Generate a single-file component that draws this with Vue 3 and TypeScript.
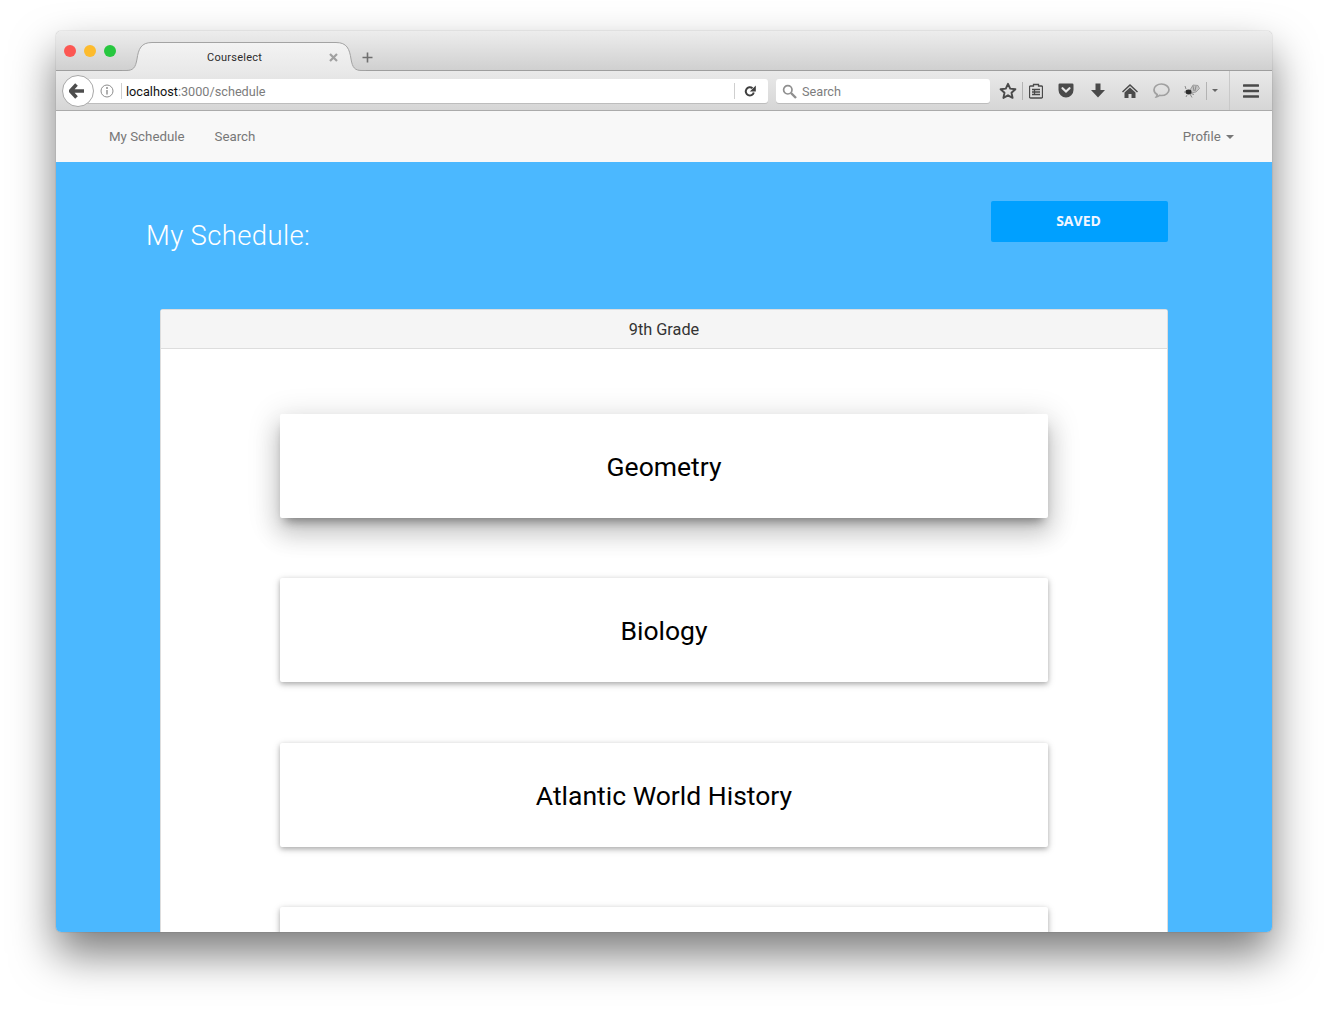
<script setup lang="ts">
const courses: string[] = ['Geometry', 'Biology', 'Atlantic World History', 'Algebra']
</script>

<template>
  <div class="stage">
    <div class="window">
      <div class="titlebar">
        <div class="lights">
          <span class="light red"></span>
          <span class="light yellow"></span>
          <span class="light green"></span>
        </div>
        <div class="tab">
          <svg class="tab-shape" width="244" height="29" viewBox="0 0 244 29">
            <defs>
              <linearGradient id="tabfill" x1="0" y1="0" x2="0" y2="1">
                <stop offset="0" stop-color="#f3f3f3" />
                <stop offset="1" stop-color="#e9e9e9" />
              </linearGradient>
            </defs>
            <path d="M0 28.500H4C11 28.500 13.500 26 15 17C16.500 7 19 .5 30 .5H214C225 .5 227.500 7 229 17C230.500 26 233 28.500 240 28.500H244V29H0Z" fill="url(#tabfill)" />
            <path d="M0 28.500H4C11 28.500 13.500 26 15 17C16.500 7 19 .5 30 .5H214C225 .5 227.500 7 229 17C230.500 26 233 28.500 240 28.500H244" fill="none" stroke="#a3a3a3" />
          </svg>
          <span class="tab-title">Courselect</span>
          <svg class="tab-close" width="9" height="9" viewBox="0 0 9 9"><path d="M1 1l7 7M8 1L1 8" stroke="#a0a0a0" stroke-width="2.200" /></svg>
        </div>
        <svg class="plus" width="11" height="11" viewBox="0 0 11 11"><path d="M5.500 .5v10M.5 5.500h10" stroke="#6f6f6f" stroke-width="1.600" /></svg>
      </div>

      <div class="toolbar">
        <div class="back">
          <svg width="16" height="16" viewBox="0 0 16 16"><path d="M7.500 1.500L1.500 8l6 6.500M2 8h13" fill="none" stroke="#4d4d4d" stroke-width="3.600" stroke-linejoin="round" /></svg>
        </div>
        <div class="urlbar">
          <svg class="info" width="14" height="14" viewBox="0 0 14 14">
            <circle cx="7" cy="7" r="6" fill="none" stroke="#8e8e8e" />
            <circle cx="7" cy="4" r="1" fill="#8e8e8e" />
            <path d="M7 6v4.500" stroke="#8e8e8e" stroke-width="1.400" />
          </svg>
          <span class="sep"></span>
          <span class="url"><span class="host">localhost</span>:3000/schedule</span>
          <span class="sep right"></span>
          <svg class="reload" width="12" height="12" viewBox="0 0 12 12">
            <path d="M9.800 7.500A4.100 4.100 0 1 1 8.500 3.200" fill="none" stroke="#3f3f3f" stroke-width="2" />
            <path d="M11.800 .5v6h-6z" fill="#3f3f3f" />
          </svg>
        </div>
        <div class="searchbar">
          <svg width="15" height="15" viewBox="0 0 15 15">
            <circle cx="5.800" cy="5.800" r="4.200" fill="none" stroke="#8f8f8f" stroke-width="1.700" />
            <path d="M9 9l5 5" stroke="#8f8f8f" stroke-width="2.400" />
          </svg>
          <span>Search</span>
        </div>
        <div class="tools">
          <svg class="t-star" width="18" height="18" viewBox="0 0 18 18"><path d="M9 1.800l2.200 4.800 5.200.6-3.900 3.500 1.100 5.200L9 13.300l-4.600 2.600 1.100-5.200L1.600 7.200l5.200-.6z" fill="none" stroke="#4a4a4a" stroke-width="1.900" stroke-linejoin="round" /></svg>
          <span class="tsep first"></span>
          <svg class="t-list" width="14" height="16" viewBox="0 0 14 16">
            <path d="M4.500 3V1.500h5V3H12.500a1 1 0 0 1 1 1v10a1 1 0 0 1-1 1h-11a1 1 0 0 1-1-1V4a1 1 0 0 1 1-1z" fill="none" stroke="#4a4a4a" stroke-width="1.300" />
            <path d="M3 6.500h8M3 9h8M3 11.500h8M5.500 6v6" stroke="#4a4a4a" stroke-width="1.300" />
          </svg>
          <svg class="t-pocket" width="16" height="15" viewBox="0 0 16 15">
            <path d="M1.800 .5h12.400A1.300 1.300 0 0 1 15.500 1.800V7A7.500 7.500 0 0 1 .5 7V1.800A1.300 1.300 0 0 1 1.800 .5z" fill="#4a4a4a" />
            <path d="M4.500 5.200L8 8.500l3.500-3.300" fill="none" stroke="#e6e6e6" stroke-width="2.200" stroke-linecap="round" />
          </svg>
          <svg class="t-down" width="14" height="15" viewBox="0 0 14 15"><path d="M4.500 .5h5V7H14L7 14.500 0 7h4.500z" fill="#4a4a4a" /></svg>
          <svg class="t-home" width="16" height="14" viewBox="0 0 16 14">
            <path d="M8 0L0 7.500l1 1L8 2l7 6.500 1-1z" fill="#4a4a4a" />
            <path d="M8 3.500l-5.500 5V14h4V10h3v4h4V8.500z" fill="#4a4a4a" />
          </svg>
          <svg class="t-chat" width="17" height="15" viewBox="0 0 17 15"><path d="M8.500 1C4.500 1 1 3.500 1 6.800c0 2 1.300 3.700 3.200 4.700-.1.900-.4 1.700-.8 2.300 1.200-.2 2.300-.8 3.200-1.500.6.100 1.300.2 1.900.2 4 0 7.500-2.600 7.500-5.700S12.500 1 8.500 1z" fill="none" stroke="#a0a0a0" stroke-width="1.700" /></svg>
          <svg class="t-bug" width="16" height="14" viewBox="0 0 16 14">
            <path d="M6 6l3-5 5 .5 1.500 3L12 8l-5 1z" fill="#c4c4c4" stroke="#8a8a8a" stroke-width=".7" />
            <path d="M9 2l1 5M12 2l-1 5" stroke="#777" stroke-width=".7" />
            <ellipse cx="4.500" cy="8" rx="3" ry="2.400" fill="#2d2d2d" />
            <path d="M2 5L1 2M1.500 8H0M3 11l-1 2M6 10l2 3.500M7 9.500l3 1" stroke="#777" stroke-width=".8" />
          </svg>
          <span class="tsep second"></span>
          <span class="t-caret"></span>
          <span class="tsep third"></span>
          <svg class="t-menu" width="16" height="14" viewBox="0 0 16 14"><path d="M1 1.500h14M1 7h14M1 12.500h14" stroke="#4a4a4a" stroke-width="2.600" stroke-linecap="round" /></svg>
        </div>
      </div>

      <nav class="nav">
        <a class="nav-link first">My Schedule</a>
        <a class="nav-link">Search</a>
        <a class="nav-link profile">Profile <span class="caret"></span></a>
      </nav>

      <main class="page">
        <header class="page-head">
          <h1>My Schedule:</h1>
          <button class="saved" type="button">SAVED</button>
        </header>
        <section class="panel">
          <div class="panel-head">9th Grade</div>
          <div class="panel-body">
            <div v-for="(course, i) in courses" :key="course" class="course" :class="{ raised: i === 0 }">
              <span v-if="i < 3" class="course-name">{{ course }}</span>
            </div>
          </div>
        </section>
      </main>
    </div>
  </div>
</template>

<style>
html, body { margin: 0; background: #fff; }
</style>

<style scoped>
.stage {
  width: 1328px;
  height: 1012px;
  box-sizing: border-box;
  padding: 31px 56px 0;
  overflow: hidden;
  background: #fff;
}
.window {
  width: 1216px;
  height: 901px;
  border-radius: 5px;
  display: flex;
  flex-direction: column;
  box-shadow: 0 22px 44px rgba(0, 0, 0, .52), 0 0 1px rgba(0, 0, 0, .5);
  font-family: "Liberation Sans", sans-serif;
}
.titlebar {
  height: 39px;
  flex: none;
  display: flex;
  align-items: flex-start;
  background: linear-gradient(#ededed, #d0d0d0);
  border-radius: 5px 5px 0 0;
  border-bottom: 1px solid #9e9e9e;
}
.lights { display: flex; gap: 8px; padding: 14px 0 0 8px; width: 66px; box-sizing: border-box; flex: none; }
.light { width: 12px; height: 12px; border-radius: 50%; }
.red { background: #fc5753; }
.yellow { background: #fdbb2d; }
.green { background: #27c73f; }
.tab {
  position: relative;
  width: 244px;
  height: 29px;
  margin-top: 11px;
  flex: none;
}
.tab-shape { position: absolute; left: 0; top: 0; }
.tab-title {
  position: absolute;
  left: 85px;
  top: 9px;
  font-size: 11px;
  line-height: 14px;
  color: #2c2c2c;
  font-family: Roboto, sans-serif;
  letter-spacing: .25px;
}
.tab-close { position: absolute; left: 207px; top: 11px; }
.plus { margin: 21px 0 0 -4px; }
.toolbar {
  height: 39px;
  flex: none;
  display: flex;
  align-items: center;
  background: linear-gradient(#e9e9e9, #d6d6d6);
  border-bottom: 1px solid #ababab;
}
.back {
  height: 30px;
  width: 28px;
  margin-left: 6px;
  padding-right: 2px;
  flex: none;
  border-radius: 50%;
  background: #fff;
  border: 1px solid #a8a8a8;
  display: flex;
  align-items: center;
  justify-content: center;
  position: relative;
  z-index: 1;
}
.urlbar {
  width: 690px;
  height: 24px;
  margin-left: -16px;
  margin-top: 1px;
  padding-left: 22px;
  box-sizing: border-box;
  background: #fff;
  border-radius: 3px;
  box-shadow: 0 1px 0 #bdbdbd;
  display: flex;
  align-items: center;
  flex: none;
}
.sep { width: 1px; height: 16px; background: #cfcfcf; margin-left: 7px; }
.sep.right { margin-left: auto; }
.url { margin-left: 4px; font-size: 12.700px; color: #7c7c7c; font-family: Roboto, sans-serif; }
.host { color: #111; }
.reload { margin: 0 12px 0 9px; }
.searchbar {
  width: 214px;
  height: 24px;
  margin-left: 8px;
  margin-top: 1px;
  padding-left: 6px;
  box-sizing: border-box;
  background: #fff;
  border-radius: 3px;
  box-shadow: 0 1px 0 #bdbdbd;
  display: flex;
  align-items: center;
  gap: 5px;
  flex: none;
  font-size: 12.700px;
  color: #7d7d7d;
  font-family: Roboto, sans-serif;
}
.tools { display: flex; align-items: center; flex: none; height: 39px; margin-left: 9px; }
.t-star { flex: none; }
.tsep { width: 1px; background: #b3b3b3; height: 18px; flex: none; }
.tsep.first { margin-left: 5px; }
.t-list { margin-left: 6px; }
.t-pocket { margin-left: 15px; }
.t-down { margin-left: 17px; }
.t-home { margin-left: 17px; }
.t-chat { margin-left: 15px; }
.t-bug { margin-left: 14px; }
.tsep.second { margin-left: 6px; }
.t-caret {
  margin-left: 5px;
  border-left: 3.500px solid transparent;
  border-right: 3.500px solid transparent;
  border-top: 3.500px solid #666;
}
.tsep.third { margin-left: 11px; height: 39px; background: #c9c9c9; }
.t-menu { margin-left: 13px; }
.nav {
  height: 51px;
  flex: none;
  box-sizing: border-box;
  padding-bottom: 1px;
  display: flex;
  align-items: center;
  background: #f8f8f8;
  font-family: Roboto, sans-serif;
  font-size: 13.300px;
  color: #777;
}
.nav-link { margin-left: 30px; }
.nav-link.first { margin-left: 53px; }
.profile { margin-left: auto; margin-right: 38px; }
.caret {
  display: inline-block;
  margin-left: 2px;
  vertical-align: middle;
  border-left: 4px solid transparent;
  border-right: 4px solid transparent;
  border-top: 4px solid #777;
}
.page {
  flex: 1;
  min-height: 0;
  overflow: hidden;
  background: #4bb8ff;
  border-radius: 0 0 5px 5px;
  padding: 39px 104px 0;
}
.page-head {
  display: flex;
  justify-content: space-between;
  align-items: flex-start;
  height: 108px;
}
.page-head h1 {
  margin: 17px 0 0 -14px;
  font-family: Roboto, sans-serif;
  font-weight: 300;
  font-size: 27.500px;
  line-height: 36px;
  color: #fff;
  letter-spacing: .35px;
}
.saved {
  width: 177px;
  height: 41px;
  border: 0;
  padding: 0 2px 2px 0;
  border-radius: 2px;
  background: #00a0ff;
  color: #f2f6ff;
  font-family: "Open Sans", sans-serif;
  font-weight: 700;
  font-size: 14px;
}
.panel {
  background: #fff;
  border: 1px solid #ddd;
  border-bottom: 0;
  border-radius: 3px 3px 0 0;
  height: 700px;
  box-sizing: border-box;
}
.panel-head {
  height: 38px;
  background: #f5f5f5;
  border-bottom: 1px solid #ddd;
  text-align: center;
  font-family: Roboto, sans-serif;
  font-size: 16.300px;
  line-height: 40px;
  color: #333;
}
.panel-body {
  padding: 65px 119px 0;
  display: flex;
  flex-direction: column;
  gap: 60.330px;
}
.course {
  height: 104px;
  flex: none;
  border-radius: 2px;
  background: #fff;
  display: flex;
  align-items: center;
  justify-content: center;
  font-family: Roboto, sans-serif;
  font-size: 26.500px;
  color: #000;
  box-shadow: 0 2px 5px rgba(0, 0, 0, .26), 0 2px 10px rgba(0, 0, 0, .12);
}
.course-name { margin-top: 1px; }
.course.raised {
  box-shadow: 0 16px 24px 2px rgba(0, 0, 0, .14), 0 6px 30px 5px rgba(0, 0, 0, .12), 0 8px 10px -5px rgba(0, 0, 0, .4);
}
</style>
